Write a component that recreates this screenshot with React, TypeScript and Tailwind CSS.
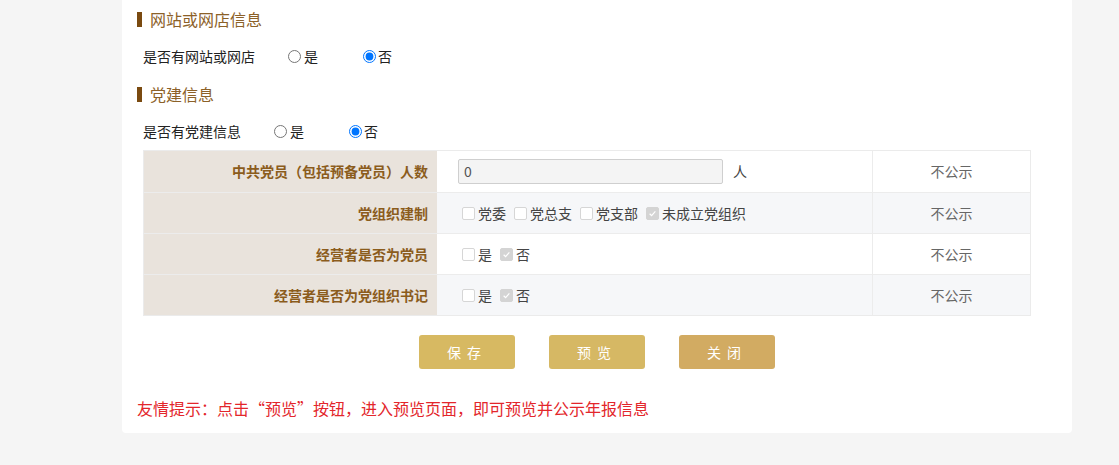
import React from 'react';

type Row = {
  label: string;
  kind: 'input' | 'checks';
  options?: { text: string; checked: boolean }[];
};

const rows: Row[] = [
  { label: '中共党员（包括预备党员）人数', kind: 'input' },
  {
    label: '党组织建制',
    kind: 'checks',
    options: [
      { text: '党委', checked: false },
      { text: '党总支', checked: false },
      { text: '党支部', checked: false },
      { text: '未成立党组织', checked: true },
    ],
  },
  {
    label: '经营者是否为党员',
    kind: 'checks',
    options: [
      { text: '是', checked: false },
      { text: '否', checked: true },
    ],
  },
  {
    label: '经营者是否为党组织书记',
    kind: 'checks',
    options: [
      { text: '是', checked: false },
      { text: '否', checked: true },
    ],
  },
];

const SectionTitle: React.FC<{ title: string }> = ({ title }) => (
  <div className="flex h-[38px] items-center pl-[15px]">
    <span className="mr-[8px] h-[15px] w-[5px] bg-[#7a4a10]" />
    <span className="text-[16px] leading-[22px] text-[#8c6128]">{title}</span>
  </div>
);

const YesNo: React.FC<{ label: string; name: string }> = ({ label, name }) => (
  <div className="flex h-[37px] items-center pl-[21px] text-[14px] text-[#222]">
    <span>{label}</span>
    <label className="ml-[33px] flex w-[75px] items-center">
      <input type="radio" name={name} className="m-0 h-[13px] w-[13px]" />
      <span className="ml-[3px]">是</span>
    </label>
    <label className="flex items-center">
      <input type="radio" name={name} defaultChecked className="m-0 h-[13px] w-[13px]" />
      <span className="ml-[2px]">否</span>
    </label>
  </div>
);

const Check: React.FC<{ text: string; checked: boolean }> = ({ text, checked }) => (
  <label className="mr-[8px] flex items-center">
    <span
      className={`flex h-[13px] w-[13px] items-center justify-center rounded-[2px] border ${
        checked ? 'border-[#d4d4d4] bg-[#d4d4d4]' : 'border-[#d6d6d6] bg-white'
      }`}
    >
      {checked && (
        <svg viewBox="0 0 12 12" className="h-[9px] w-[9px]">
          <path d="M2.2 6.3 4.8 8.8 9.8 3.2" fill="none" stroke="#fff" strokeWidth="1.6" />
        </svg>
      )}
    </span>
    <span className="ml-[3px] text-[#444]">{text}</span>
  </label>
);

export default function App() {
  return (
    <div
      className="min-h-[465px] bg-[#f5f5f5]"
      style={{ fontFamily: '"Microsoft YaHei", "Noto Sans CJK SC", sans-serif' }}
    >
      <div className="ml-[122px] w-[950px] rounded-b-[4px] bg-white pb-[14px]">
        <SectionTitle title="网站或网店信息" />
        <YesNo label="是否有网站或网店" name="web" />
        <SectionTitle title="党建信息" />
        <YesNo label="是否有党建信息" name="party" />

        <div className="ml-[21px] w-[888px] border border-[#ebebeb] text-[14px]">
          {rows.map((row, i) => (
            <div
              key={row.label}
              className={`flex h-[41px] ${i > 0 ? 'border-t border-[#ececec]' : ''} ${
                i % 2 === 1 ? 'bg-[#f6f7f9]' : 'bg-white'
              }`}
            >
              <div className="flex w-[293px] items-center justify-end bg-[#e9e3dc] pr-[9px] font-bold text-[#8b5c1c]">
                {row.label}
              </div>
              <div className="flex w-[435px] items-center pl-[21px]">
                {row.kind === 'input' ? (
                  <>
                    <div className="flex h-[25px] w-[265px] items-center rounded-[2px] border border-[#cfcfcf] bg-[#f4f4f4] px-[5px] text-[14px] text-[#555]">
                      0
                    </div>
                    <span className="ml-[10px] text-[#444]">人</span>
                  </>
                ) : (
                  <div className="flex items-center pl-[4px]">
                    {row.options!.map((o) => (
                      <Check key={o.text} {...o} />
                    ))}
                  </div>
                )}
              </div>
              <div className="flex flex-1 items-center justify-center border-l border-[#ececec] text-[#666]">
                不公示
              </div>
            </div>
          ))}
        </div>

        <div className="mt-[19px] flex justify-center gap-[34px]">
          <button className="h-[34px] w-[96px] rounded-[3px] bg-[#d7b962] text-[14px] tracking-[6px] text-white">
            保存
          </button>
          <button className="h-[34px] w-[96px] rounded-[3px] bg-[#d6b864] text-[14px] tracking-[6px] text-white">
            预览
          </button>
          <button className="h-[34px] w-[96px] rounded-[3px] bg-[#d2ab62] text-[14px] tracking-[6px] text-white">
            关闭
          </button>
        </div>

        <p className="mt-[28px] pl-[15px] text-[16px] leading-[22px] text-[#e3262b]">
          友情提示：点击“预览”按钮，进入预览页面，即可预览并公示年报信息
        </p>
      </div>
    </div>
  );
}
